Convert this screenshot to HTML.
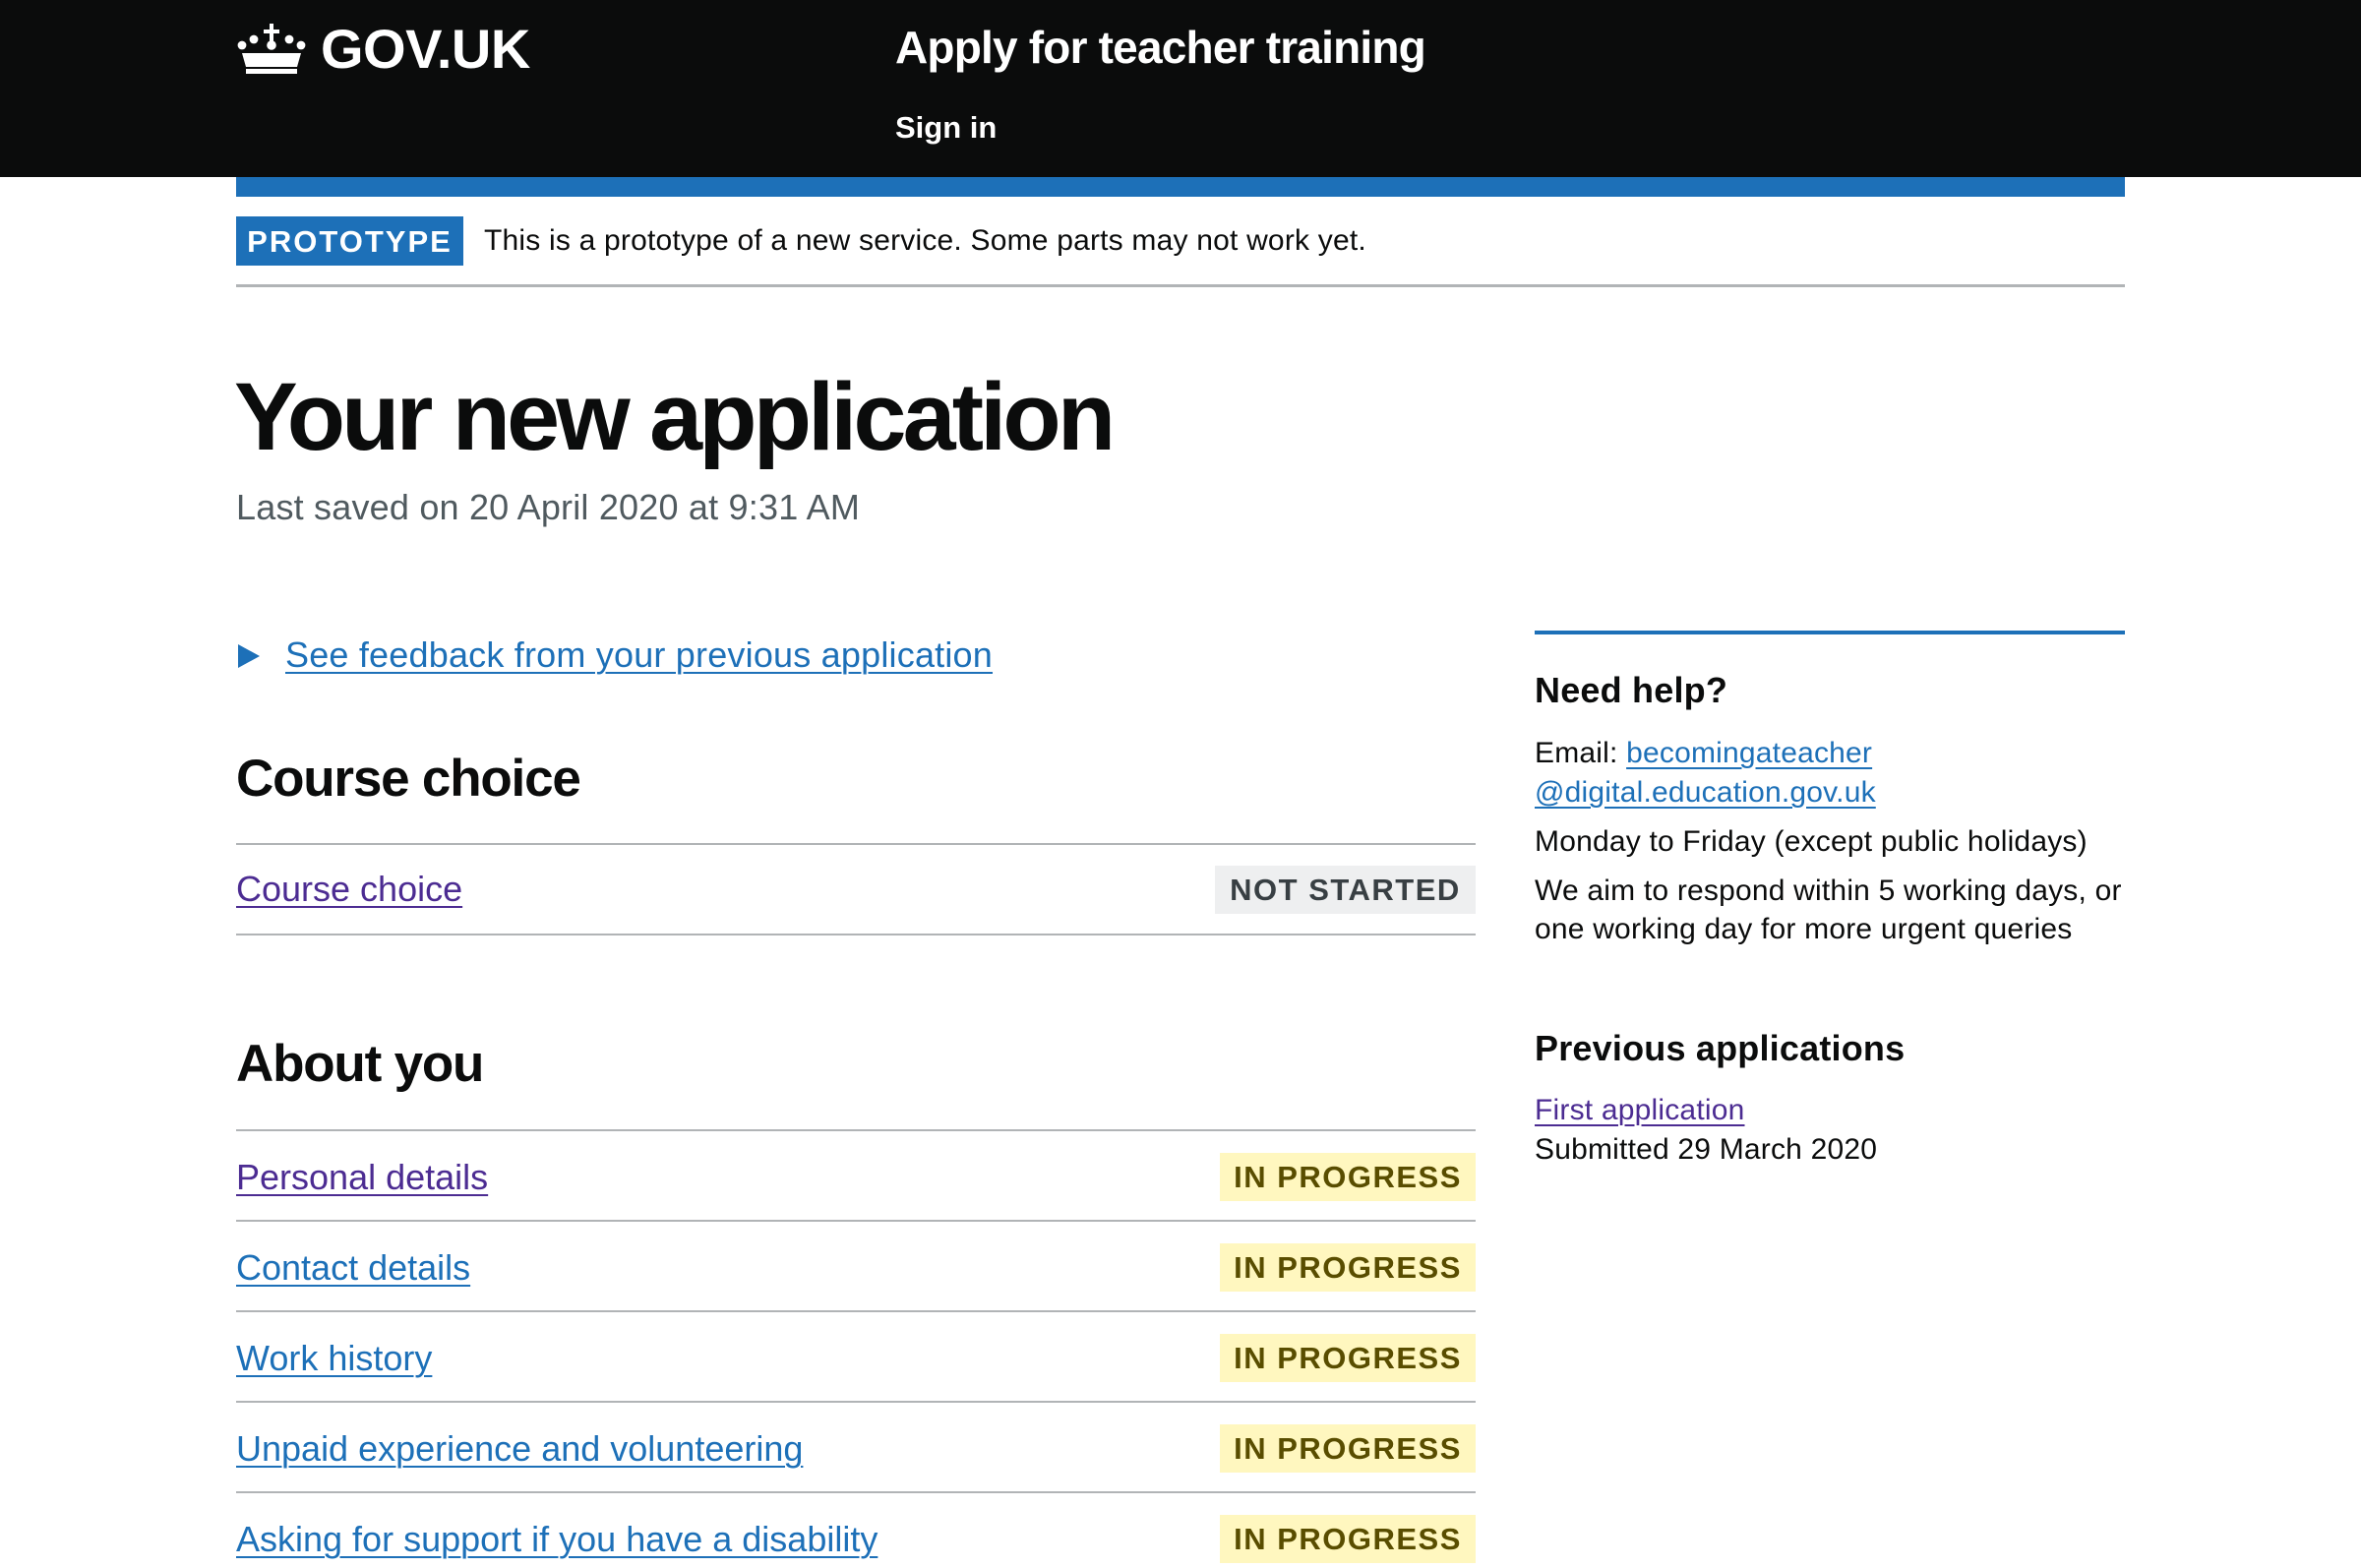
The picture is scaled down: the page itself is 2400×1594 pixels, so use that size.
<!DOCTYPE html>
<html><head><meta charset="utf-8"><style>
*{margin:0;padding:0;box-sizing:border-box}
body{width:2400px;height:1594px;background:#fff;font-family:"Liberation Sans",Arial,sans-serif;color:#0b0c0c;position:relative;overflow:hidden}
.a{position:absolute;white-space:nowrap;line-height:1}
.hdr{position:absolute;left:0;top:0;width:2400px;height:180px;background:#0b0c0c}
.blue{position:absolute;left:240px;top:180px;width:1920px;height:20px;background:#1d70b8}
a{text-decoration:underline;text-underline-offset:5px;text-decoration-thickness:2px}
.lk{color:#1d70b8}.vs{color:#4c2c92}
.line{position:absolute;height:2px;background:#b1b4b6}
.tag{position:absolute;height:49px;font-weight:bold;font-size:31px;letter-spacing:1.5px;display:flex;align-items:center;justify-content:center}
.ns{background:#eeeff0;color:#383f43;left:1235px;width:265px}
.ip{background:#fff7bf;color:#594d00;left:1240px;width:260px}
.row{position:absolute;left:240px;font-size:36px;line-height:1}
.r{font-size:30px;position:absolute;left:1560px;line-height:1;white-space:nowrap;letter-spacing:0.2px}
</style></head><body>
<div class="hdr"></div>
<svg class="a" style="left:240px;top:22px" width="72" height="54" viewBox="0 0 36 27"><g fill="#fff"><rect x="17" y="1" width="2" height="9"/><rect x="14" y="4" width="8" height="2"/><circle cx="9" cy="9" r="2.2"/><circle cx="27" cy="9" r="2.2"/><circle cx="3" cy="12" r="2.2"/><circle cx="33" cy="12" r="2.2"/><circle cx="18" cy="12" r="2.4"/><path d="M3 16 L33 16 L31 23 L5 23Z"/><rect x="5" y="24" width="26" height="2.5"/></g></svg>
<div class="a" style="left:326px;top:22px;color:#fff;font-weight:bold;font-size:56px;letter-spacing:-0.5px">GOV.UK</div>
<div class="a" style="left:910px;top:25px;color:#fff;font-weight:bold;font-size:46px;letter-spacing:-0.8px">Apply for teacher training</div>
<div class="a" style="left:910px;top:114px;color:#fff;font-weight:bold;font-size:31px">Sign in</div>
<div class="blue"></div>
<div class="a" style="left:240px;top:220px;width:231px;height:50px;background:#1d70b8;color:#fff;font-weight:bold;font-size:31px;letter-spacing:2px;display:flex;align-items:center;justify-content:center">PROTOTYPE</div>
<div class="a" style="left:492px;top:230px;font-size:30px;letter-spacing:0.2px">This is a prototype of a new service. Some parts may not work yet.</div>
<div class="line" style="left:240px;top:289px;width:1920px;height:3px"></div>
<div class="a" style="left:238px;top:375px;font-weight:bold;font-size:97px;letter-spacing:-3.8px">Your new application</div>
<div class="a" style="left:240px;top:498px;font-size:36px;color:#505a5f;letter-spacing:0.2px">Last saved on 20 April 2020 at 9:31 AM</div>
<svg class="a" style="left:240px;top:654px" width="26" height="26" viewBox="0 0 26 26"><path d="M2 1 L24 13 L2 25Z" fill="#1d70b8"/></svg>
<div class="a" style="left:290px;top:648px;font-size:36px;letter-spacing:0.2px"><a class="lk">See feedback from your previous application</a></div>
<div class="a" style="left:240px;top:765px;font-weight:bold;font-size:53px;letter-spacing:-1.2px">Course choice</div>
<div class="line" style="left:240px;top:857px;width:1260px"></div>
<div class="row" style="top:886px"><a class="vs">Course choice</a></div>
<div class="tag ns" style="top:880px">NOT STARTED</div>
<div class="line" style="left:240px;top:949px;width:1260px"></div>
<div class="a" style="left:240px;top:1055px;font-weight:bold;font-size:53px;letter-spacing:-1.2px">About you</div>
<div class="line" style="left:240px;top:1148px;width:1260px"></div>
<div class="row" style="top:1179px"><a class="vs">Personal details</a></div>
<div class="tag ip" style="top:1172px">IN PROGRESS</div>
<div class="line" style="left:240px;top:1240px;width:1260px"></div>
<div class="row" style="top:1271px"><a class="lk">Contact details</a></div>
<div class="tag ip" style="top:1264px">IN PROGRESS</div>
<div class="line" style="left:240px;top:1332px;width:1260px"></div>
<div class="row" style="top:1363px"><a class="lk">Work history</a></div>
<div class="tag ip" style="top:1356px">IN PROGRESS</div>
<div class="line" style="left:240px;top:1424px;width:1260px"></div>
<div class="row" style="top:1455px"><a class="lk">Unpaid experience and volunteering</a></div>
<div class="tag ip" style="top:1448px">IN PROGRESS</div>
<div class="line" style="left:240px;top:1516px;width:1260px"></div>
<div class="row" style="top:1547px"><a class="lk">Asking for support if you have a disability</a></div>
<div class="tag ip" style="top:1540px">IN PROGRESS</div>

<div class="a" style="left:1560px;top:641px;width:600px;height:4px;background:#1d70b8"></div>
<div class="r" style="top:684px;font-weight:bold;font-size:36px">Need help?</div>
<div class="r" style="top:751px">Email: <a class="lk">becomingateacher</a></div>
<div class="r" style="top:791px"><a class="lk">@digital.education.gov.uk</a></div>
<div class="r" style="top:841px">Monday to Friday (except public holidays)</div>
<div class="r" style="top:891px">We aim to respond within 5 working days, or</div>
<div class="r" style="top:930px">one working day for more urgent queries</div>
<div class="r" style="top:1048px;font-weight:bold;font-size:36px">Previous applications</div>
<div class="r" style="top:1114px"><a class="vs">First application</a></div>
<div class="r" style="top:1154px">Submitted 29 March 2020</div>
</body></html>
